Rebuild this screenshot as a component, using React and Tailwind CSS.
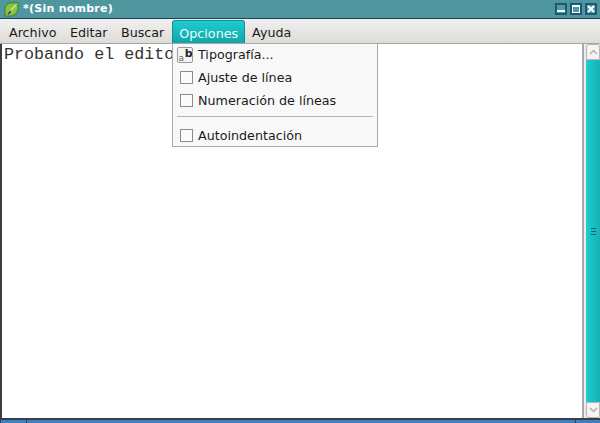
const menus = ["Archivo", "Editar", "Buscar"];

function Check({ children }) {
  return (
    <div className="flex items-center h-[23px] pl-[7px]">
      <span className="w-[13px] h-[13px] border border-[#8c8c8c] bg-[#fbfbfb] mr-[5px] shrink-0" />
      <span>{children}</span>
    </div>
  );
}

function WinButton({ children }) {
  return (
    <div className="w-[12px] h-[12px] border-2 border-[#1d5a72] bg-[#4f9ca6] flex items-center justify-center">
      <svg width="8" height="8" viewBox="0 0 8 8" className="block">{children}</svg>
    </div>
  );
}

export default function App() {
  return (
    <div className="relative w-[600px] h-[423px] overflow-hidden flex flex-col bg-[#dcdad5] text-[12.7px] text-[#1a1a1a] font-['DejaVu_Sans',sans-serif]">
      <div className="h-[18px] shrink-0 bg-[#4f969f] flex items-center pl-[4px] pr-[2px]">
        <svg width="15" height="15" viewBox="0 0 15 15" className="shrink-0">
          <path d="M1 14 L1 6 Q2 1 7 1 L14 0.5 L14 7 Q13 13 7 14 Z" fill="#86c63f" stroke="#3f7f2a" strokeWidth="1" />
          <path d="M4 11 L12 3" stroke="#c9e89a" strokeWidth="1.5" />
          <path d="M4 12 L7 9" stroke="#2a4fa0" strokeWidth="2" />
          <path d="M7 9 L9 10" stroke="#e8b020" strokeWidth="1.5" />
        </svg>
        <span className="ml-[4px] font-bold text-[11px] tracking-[0.25px] text-white">*(Sin nombre)</span>
        <div className="ml-auto flex gap-[3px] pr-[1px]">
          <WinButton><rect x="0" y="5" width="8" height="2" fill="#fff" /></WinButton>
          <WinButton><rect x="0.5" y="0.5" width="7" height="7" fill="none" stroke="#fff" /><rect x="0" y="0" width="8" height="2" fill="#fff" /></WinButton>
          <WinButton><path d="M1 1 L7 7 M7 1 L1 7" stroke="#fff" strokeWidth="2" /></WinButton>
        </div>
      </div>
      <div className="h-px shrink-0 bg-[#1b3f66]" />
      <div className="relative h-[25px] shrink-0 flex items-stretch pl-[2px] bg-gradient-to-b from-[#f1f0ee] to-[#dedcd9] border-b border-[#a5a5a5]">
        <div className="px-[7px] pt-[4px]">{menus[0]}</div>
        <div className="pl-[6.5px] pr-[7px] pt-[4px]">{menus[1]}</div>
        <div className="pl-[6.5px] pr-[8px] pt-[4px]">{menus[2]}</div>
        <div className="px-[6px] pt-[3px] mt-px rounded-t-[3px] bg-gradient-to-b from-[#1ccdd0] to-[#12a5a8] border border-[#138d90] border-b-0 text-[#e8ffff]">Opciones</div>
        <div className="px-[7px] pt-[4px]">Ayuda</div>
      </div>
      <div className="flex-1 min-h-0 flex bg-white border-l-2 border-[#3a3f45]">
        <div className="flex-1 pl-[2px] pt-[1px] text-[16.7px] leading-[20px] text-[#333] font-['Liberation_Mono',monospace]">Probando el editor</div>
        <div className="w-[18px] shrink-0 flex flex-col border-l-2 border-[#a9a9ad] bg-[#ecebe9] pl-[2px]">
          <div className="h-[16px] shrink-0 rounded-t-[3px] border border-[#b5b5b5] bg-[#f4f4f2] flex items-center justify-center">
            <svg width="9" height="6" viewBox="0 0 9 6"><path d="M1 5 L4.5 1.5 L8 5" fill="none" stroke="#b0b0b0" strokeWidth="1.5" /></svg>
          </div>
          <div className="flex-1 bg-gradient-to-r from-[#1ccdd0] to-[#18b0b4] flex flex-col items-center justify-center gap-[2px]">
            <span className="w-[5px] h-px bg-[#15606a]" />
            <span className="w-[5px] h-px bg-[#15606a]" />
            <span className="w-[5px] h-px bg-[#15606a]" />
          </div>
          <div className="h-[16px] shrink-0 rounded-b-[3px] border border-[#b5b5b5] bg-[#f4f4f2] flex items-center justify-center">
            <svg width="9" height="6" viewBox="0 0 9 6"><path d="M1 1 L4.5 4.5 L8 1" fill="none" stroke="#b0b0b0" strokeWidth="1.5" /></svg>
          </div>
        </div>
      </div>
      <div className="h-[5px] shrink-0 flex border-t-2 border-[#3a3f45] bg-[#3a3f45]">
        <div className="w-[25px] bg-[#3d7fc0] ml-px" />
        <div className="flex-1 bg-[#3d7fc0] ml-px" />
        <div className="w-[24px] bg-[#3d7fc0] ml-px" />
      </div>
      <div className="absolute left-[172px] top-[43px] w-[206px] h-[104px] bg-[#f8f8f8] border border-[#a9a9a9]">
        <div className="flex items-center h-[21px] pl-[4px]">
          <span className="w-[16px] h-[16px] rounded-[2px] border border-[#9a9a9a] bg-[#f4f4f4] mr-[5px] shrink-0">
            <svg width="14" height="14" viewBox="0 0 14 14" className="block">
              <text x="0.5" y="13" fontSize="9" fill="#666" fontFamily="DejaVu Sans">a</text>
              <text x="6.8" y="9" fontSize="11" fontWeight="700" fill="#222" fontFamily="DejaVu Sans">b</text>
            </svg>
          </span>
          <span>Tipografía...</span>
        </div>
        <div className="h-px" />
        <Check>Ajuste de línea</Check>
        <Check>Numeración de líneas</Check>
        <div className="h-px bg-[#b5b5b5] mx-[4px] mt-[4px] mb-[7px]" />
        <Check>Autoindentación</Check>
      </div>
    </div>
  );
}
